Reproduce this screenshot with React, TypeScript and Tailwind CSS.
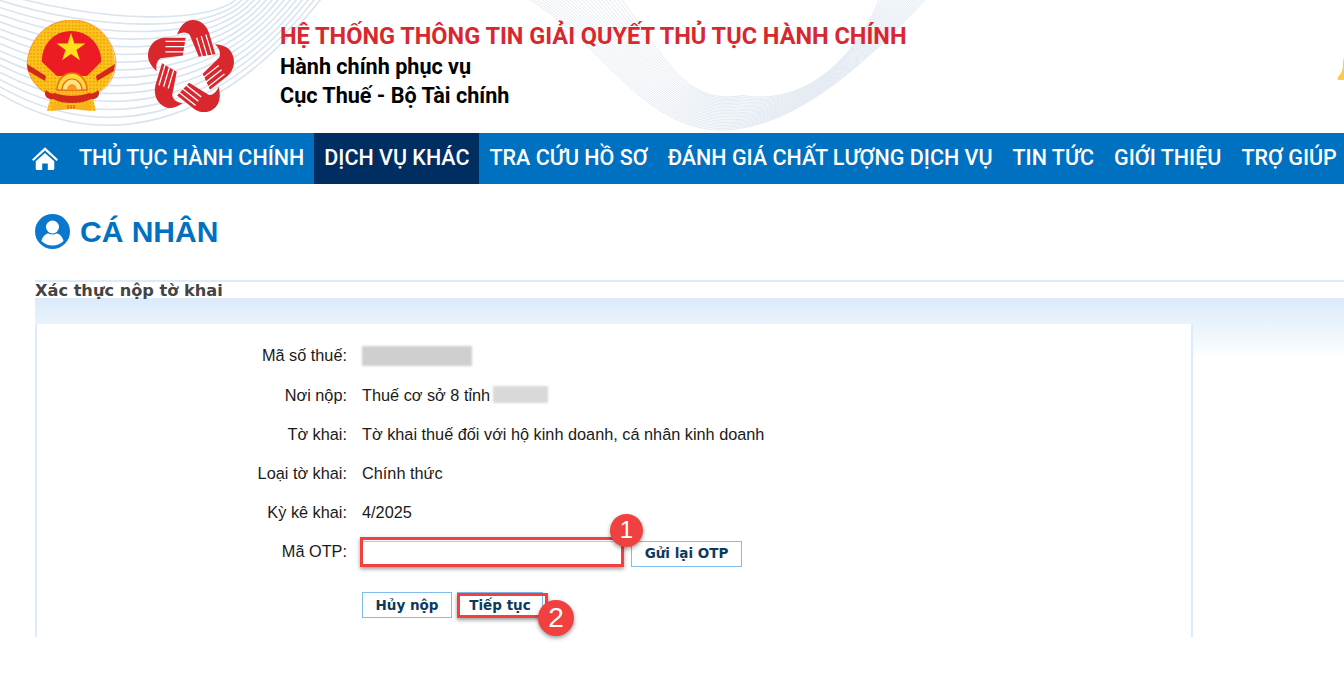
const navItems = ["THỦ TỤC HÀNH CHÍNH", "DỊCH VỤ KHÁC", "TRA CỨU HỒ SƠ", "ĐÁNH GIÁ CHẤT LƯỢNG DỊCH VỤ", "TIN TỨC", "GIỚI THIỆU", "TRỢ GIÚP"];

function Emblem() {
  return (
    <svg width="92" height="94" viewBox="11 10 92 94" className="shrink-0">
      <defs>
        <pattern id="dots" width="3.500" height="3.500" patternUnits="userSpaceOnUse">
          <rect width="3.500" height="3.500" fill="#fbc417" />
          <circle cx="1.700" cy="1.700" r="0.800" fill="#ef8a1c" />
        </pattern>
      </defs>
      {/* wreath */}
      <path d="M57 10C33 10 17 27 13 47c-2 9 0 16 5 24 5 7 11 12 18 14l-4 16 25-3 24 3-4-16c8-3 14-8 18-15 4-8 6-15 4-24C96 27 80 10 57 10Z" fill="url(#dots)" />
      <path d="M57 10C33 10 17 27 13 47c-2 9 0 16 5 24 5 7 11 12 18 14h42c8-3 14-8 18-15 4-8 6-15 4-24C96 27 80 10 57 10Z" fill="none" stroke="#f58a1f" strokeWidth="0.800" />
      {/* red field */}
      <path d="M56 21C38 21 26 36 27 52l15 14h30l14-14c1-16-12-31-30-31Z" fill="#ed1c24" />
      <path d="M56 23l3.400 10.400h11l-8.900 6.500 3.400 10.400-8.900-6.400-8.900 6.400 3.400-10.400-8.900-6.500h11Z" fill="#ffe01b" />
      {/* side ribbons */}
      <path d="M12 54l19 12-1 5-17-10Z M100 54 81 66l1 5 17-10Z" fill="#d3281c" />
      {/* gear */}
      <path d="M42 80a15 17 0 0 1 30 0Z" fill="#ffd83a" stroke="#ed6a1c" strokeWidth="1.500" />
      <path d="M47 80a10 11 0 0 1 20 0Z" fill="#ffe680" stroke="#ed6a1c" strokeWidth="1.200" />
      <path d="M52 80a5 6 0 0 1 10 0Z" fill="#f59a1f" />
      {/* banner */}
      <path d="M31 80c-3 5 1 10 7 9 6 3 12 4 19 4s13-1 19-4c6 1 10-4 7-9-3 3-6 4-9 3-5 2-11 3-17 3s-12-1-17-3c-3 1-6 0-9-3Z" fill="#d3281c" />
      <path d="M40 93l17 3 17-3 2 8-19-2-22 2Z" fill="#f9b21a" />
      <path d="M53 95v4M56 95v4M59 95v4" stroke="#d3281c" strokeWidth="0.800" />
    </svg>
  );
}

function HandsLogo() {
  return (
    <svg width="86" height="92" viewBox="7 8 89 88" preserveAspectRatio="none" className="shrink-0">
      {[0, 72, 144, 216, 288].map((r) => (
        <g key={r} transform={`rotate(${r} 50.500 54)`}>
          <path d="M46 25 24 25C14 25.500 7 33 7 42c0 5 3 10 9 15-1-6 0-10 4-12.500L43 42Z" fill="#d9272e" />
          <path d="M25 28.500H47M25 33.500H46M25 38.500H45" stroke="#fff" strokeWidth="1.300" fill="none" />
        </g>
      ))}
    </svg>
  );
}

function Waves() {
  const left = Array.from({ length: 15 }, (_, i) => i / 10);
  const right = Array.from({ length: 24 }, (_, i) => i);
  return (
    <svg width="1344" height="133" viewBox="0 0 1344 133" className="absolute left-0 top-0" fill="none">
      {left.map((t) => (
        <path key={t} d={`M-10 ${-10 + 70 * t}C100 ${25 + 95 * t} 220 ${25 + 75 * t} ${240 + 60 * t} -5`} stroke="#d8e4f0" strokeWidth="1.600" />
      ))}
      {right.map((i) => (
        <path
          key={i}
          d={`M${530 + i * 4} 0C${600 + i * 3} ${40 + i} ${640 + i * 2} ${128 - i} ${720 + i} ${130 - i * 1.500}C${790 + i} ${130 - i} 860 ${70 - i} ${925 - i * 2} 0`}
          stroke="#e4ebf3"
          strokeWidth="1"
        />
      ))}
    </svg>
  );
}

function Row({ label, children }: { label: string; children: React.ReactNode }) {
  return (
    <div className="flex h-[39.200px] items-center">
      <div className="w-[311px] pr-[1px] text-right">{label}</div>
      <div className="flex items-center pl-[14px]">{children}</div>
    </div>
  );
}

function ActionButton({ children, className }: { children: React.ReactNode; className: string }) {
  return (
    <button className={`h-[26px] border border-[#7fbdf0] bg-white font-['DejaVu_Sans',sans-serif] text-[13.500px] font-bold text-[#0d3a5c] ${className}`}>
      {children}
    </button>
  );
}

export default function App() {
  return (
    <div className="h-[693px] w-[1344px] overflow-hidden bg-white font-['Liberation_Sans',sans-serif] text-[16.300px] text-[#1a1a1a]">
      {/* Header */}
      <div className="relative h-[133px] overflow-hidden">
        <Waves />
        <div className="relative flex items-start pl-[26px] pt-[20px]">
          <Emblem />
          <div className="ml-[30px]">
            <HandsLogo />
          </div>
          <div className="ml-[46px] font-['Roboto',sans-serif] font-bold">
            <div className="text-[23.500px] leading-[32px] text-[#d9272e]">HỆ THỐNG THÔNG TIN GIẢI QUYẾT THỦ TỤC HÀNH CHÍNH</div>
            <div className="text-[21.600px] leading-[29px] text-black">Hành chính phục vụ</div>
            <div className="text-[21.600px] leading-[29px] text-black">Cục Thuế - Bộ Tài chính</div>
          </div>
        </div>
        <svg width="12" height="30" viewBox="0 0 12 30" className="absolute left-[1337px] top-[50px]" fill="#fbc94f">
          <path d="M12 0C8 2 6 8 6 14c0 6-2 10-5 13-1 2 0 3 2 3h9Z" />
        </svg>
      </div>

      {/* Nav */}
      <div className="flex h-[51px] items-stretch bg-[#0070c0] pl-[32px] font-['Roboto',sans-serif] text-[21.500px] font-medium text-white">
        <div className="flex w-[37px] shrink-0 items-center">
          <svg width="26" height="25" viewBox="0 0 28 26" fill="#fff">
            <path d="M14 1 0 14l1.500 1.800L14 4.400l12.500 11.400L28 14Z" />
            <path d="M14 7 4 16v8a1.500 1.500 0 0 0 1.500 1.500H11v-7h6v7h5.500A1.500 1.500 0 0 0 24 24v-8Z" />
          </svg>
        </div>
        {navItems.map((item) => (
          <div key={item} className={`flex shrink-0 items-center whitespace-nowrap px-[10px] ${item === "DỊCH VỤ KHÁC" ? "bg-[#002d62]" : ""}`}>
            {item}
          </div>
        ))}
      </div>

      {/* Page title */}
      <div className="flex h-[96px] items-center pl-[35px] pb-[2px]">
        <svg width="35" height="35" viewBox="0 0 35 35">
          <circle cx="17.500" cy="17.500" r="17.500" fill="#0a78cf" />
          <circle cx="17.500" cy="13" r="6.500" fill="#fff" />
          <path d="M6.500 27c1-5 4.500-7.500 7-7.500 2.500 1.300 5.500 1.300 8 0 2.500 0 6 2.500 7 7.500-3 3-7 4.500-11 4.500S9.500 30 6.500 27Z" fill="#fff" />
        </svg>
        <h1 className="ml-[10px] text-[30px] font-bold text-[#0070c0]">CÁ NHÂN</h1>
      </div>

      {/* Panel */}
      <div className="ml-[35px] border-t-2 border-[#d9ecff]">
        <div className="h-[16px] font-['DejaVu_Sans',sans-serif] text-[16.200px] font-bold leading-[18px] text-[#444]">Xác thực nộp tờ khai</div>
        <div className="h-[26px] bg-gradient-to-b from-[#dbeafa] to-[#e9f3fc]" />
        <div className="flex">
          <div className="h-[313px] w-[1158px] border-x-2 border-[#dcecff] bg-white pt-[12px]">
            <Row label="Mã số thuế:">
              <div className="h-[20px] w-[110px] bg-[#cfcfcf] blur-[1px]" />
            </Row>
            <Row label="Nơi nộp:">
              Thuế cơ sở 8 tỉnh
              <div className="ml-[3px] h-[17px] w-[55px] bg-[#d9d9d9] blur-[1px]" />
            </Row>
            <Row label="Tờ khai:">Tờ khai thuế đối với hộ kinh doanh, cá nhân kinh doanh</Row>
            <Row label="Loại tờ khai:">Chính thức</Row>
            <Row label="Kỳ kê khai:">4/2025</Row>
            <Row label="Mã OTP:">
              <div className="relative mt-[4px]">
                <input className="block h-[26px] w-[262px] border border-[#c4c4c4] bg-white" />
                <div className="absolute left-[-2px] top-[-4px] h-[30px] w-[264px] border-[3px] border-[#f04040] shadow-[0_2px_4px_rgba(0,0,0,0.4)]" />
                <div className="absolute left-[248px] top-[-27px] flex h-[33px] w-[33px] items-center justify-center rounded-full bg-[#f04040] text-[24px] text-white shadow-[0_2px_4px_rgba(0,0,0,0.4)]">1</div>
              </div>
              <ActionButton className="ml-[7px] mt-[4px] w-[111px]">Gửi lại OTP</ActionButton>
            </Row>
            <div className="relative mt-[21px] flex gap-[5px] pl-[325px]">
              <ActionButton className="w-[90px]">Hủy nộp</ActionButton>
              <div className="relative">
                <ActionButton className="block w-[86px]">Tiếp tục</ActionButton>
                <div className="absolute left-0 top-[1px] h-[25px] w-[91px] border-[3px] border-[#f04040] shadow-[0_2px_4px_rgba(0,0,0,0.4)]" />
                <div className="absolute left-[81px] top-[8px] flex h-[36px] w-[36px] items-center justify-center rounded-full bg-[#f04040] text-[28px] text-white shadow-[0_2px_4px_rgba(0,0,0,0.4)]">2</div>
              </div>
            </div>
          </div>
          <div className="h-[36px] flex-1 bg-gradient-to-b from-[#e9f3fc] to-white" />
        </div>
      </div>
    </div>
  );
}
